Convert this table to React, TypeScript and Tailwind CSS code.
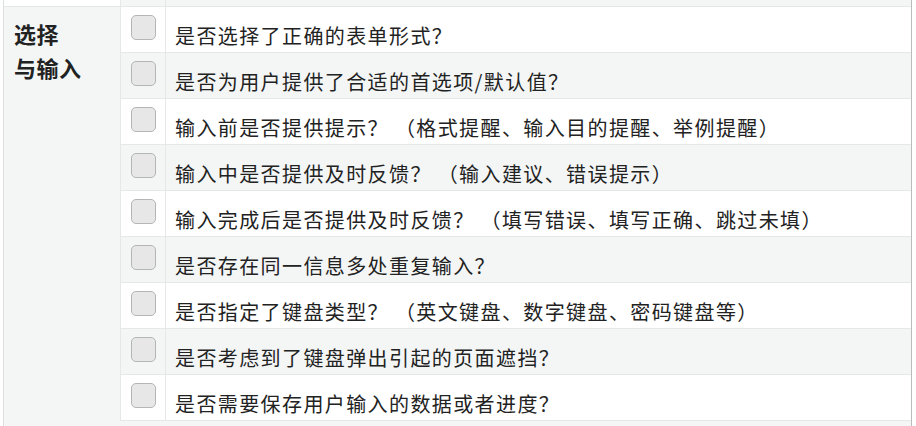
import { useState } from 'react';

const items = [
    '是否选择了正确的表单形式？',
    '是否为用户提供了合适的首选项/默认值？',
    '输入前是否提供提示？ （格式提醒、输入目的提醒、举例提醒）',
    '输入中是否提供及时反馈？ （输入建议、错误提示）',
    '输入完成后是否提供及时反馈？ （填写错误、填写正确、跳过未填）',
    '是否存在同一信息多处重复输入？',
    '是否指定了键盘类型？ （英文键盘、数字键盘、密码键盘等）',
    '是否考虑到了键盘弹出引起的页面遮挡？',
    '是否需要保存用户输入的数据或者进度？',
];

export default function App() {
    const [checked, setChecked] = useState<boolean[]>(items.map(() => false));

    const toggle = (i: number) => {
        setChecked(checked.map((c, j) => (j === i ? !c : c)));
    };

    return (
        <div
            className="w-[916px] h-[426px] overflow-hidden bg-white text-[#222]"
            style={{ fontFamily: '"Noto Sans CJK SC", "Noto Sans", sans-serif' }}
        >
            <div className="ml-[3px] w-[909px] border-l border-r border-l-[#dcdfdf] border-r-[#b9bcbc]">
                {/* tail of the previous section */}
                <div className="flex h-[7px] border-b border-[#e4e8e8]">
                    <div className="w-[117px] bg-white border-r border-[#e4e8e8]" />
                    <div className="w-[45px] bg-[#f4f6f6] border-r border-[#e4e8e8]" />
                    <div className="flex-1 bg-[#f4f6f6]" />
                </div>

                <div className="flex">
                    {/* Section label */}
                    <div className="w-[117px] shrink-0 bg-[#f4f6f6] border-r border-[#e4e8e8] pl-[10px] pt-[9px] text-[22px] leading-[34px] font-bold tracking-[0.5px]">
                        选择
                        <br />
                        与输入
                    </div>

                    {/* Checklist rows */}
                    <div className="flex-1">
                        {items.map((text, i) => (
                            <div
                                key={i}
                                className={`flex h-[46px] border-b border-[#e4e8e8] ${i % 2 === 1 ? 'bg-[#f4f6f6]' : 'bg-white'}`}
                            >
                                <div className="w-[45px] shrink-0 border-r border-[#e4e8e8] pl-[10px] pt-[8px]">
                                    <button
                                        onClick={() => toggle(i)}
                                        className={`block w-[25px] h-[25px] rounded-[5px] border border-[#b4b6b6] ${checked[i] ? 'bg-[#3b82f6]' : 'bg-[#e7e7e7]'}`}
                                        aria-label="check"
                                    />
                                </div>
                                <div className="flex-1 pl-[9px] pt-[15px] text-[20px] leading-[28px] tracking-[1.4px] whitespace-pre">
                                    {text}
                                </div>
                            </div>
                        ))}
                    </div>
                </div>

                <div className="h-[10px] bg-[#f4f6f6]" />
            </div>
        </div>
    );
}
